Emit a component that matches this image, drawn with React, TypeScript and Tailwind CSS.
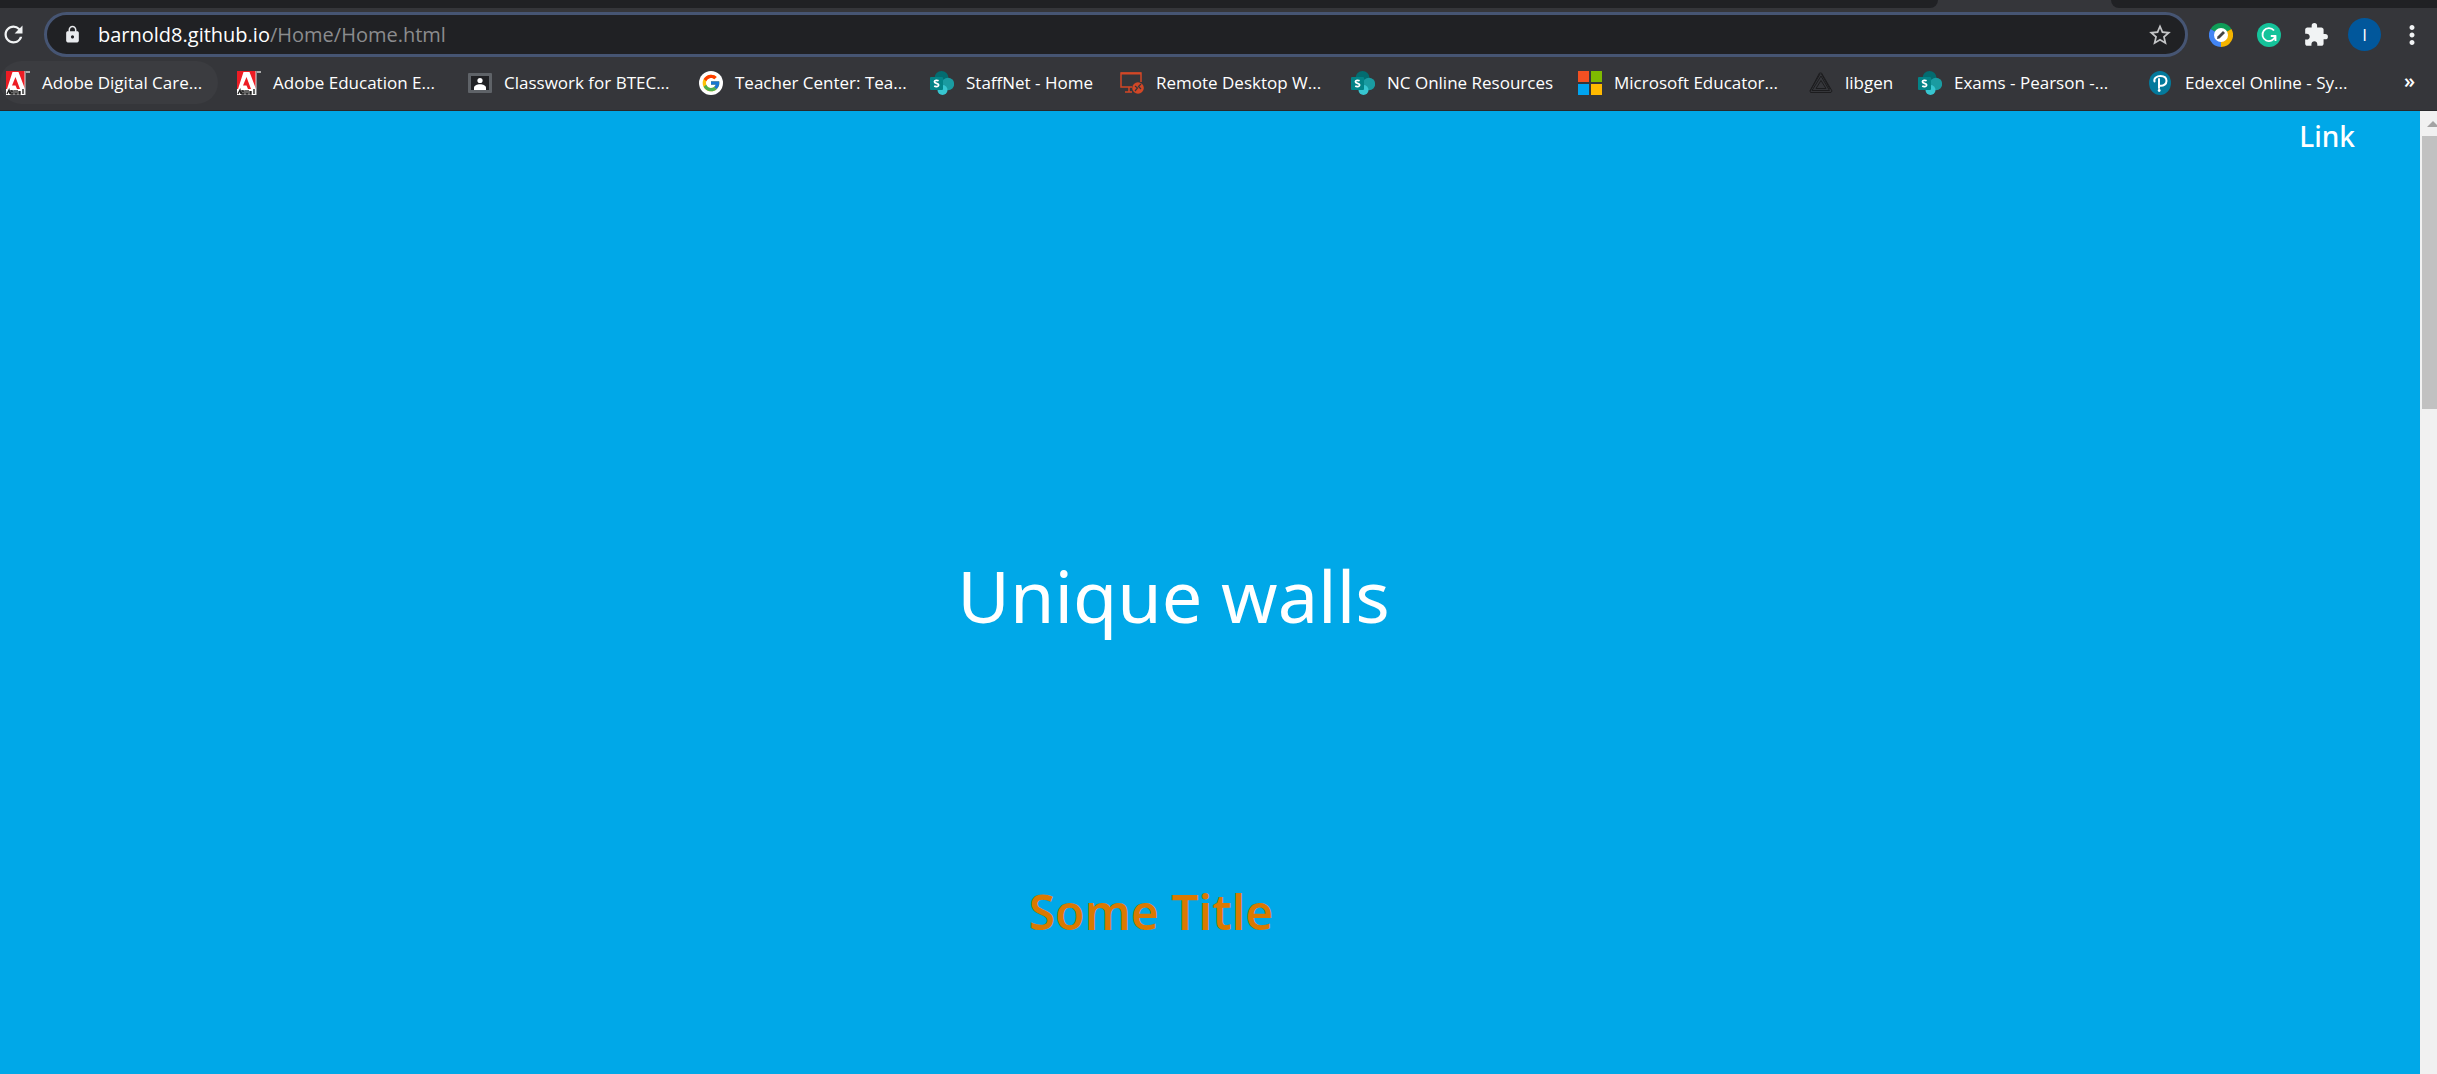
import React from "react";
import { MdLock, MdRefresh, MdStarBorder, MdExtension, MdMoreVert } from "react-icons/md";
import { FcGoogle } from "react-icons/fc";

function AdobeIcon() {
  return (
    <svg viewBox="0 0 24 24" className="size-6 shrink-0" aria-hidden="true">
      <path d="M0 0h19v18H0z" fill="#ed1c24" />
      <path d="M6.500 1h6L19 18v6H0v-6h1z" fill="#fff" />
      <path d="M9.500 6l4.500 12h-3l-1.500-3.500H6z" fill="#ed1c24" />
      <path d="M1 23l2-4 1 4M5 19v4h2v-3H5M9 19v4h2v-4M13 20v3h1v-3M17 18v5" stroke="#222" strokeWidth="1.400" fill="none" />
      <path d="M20 1h4" stroke="#aaa" strokeWidth="2" />
      <path d="M19 0v24" stroke="#ddd" strokeWidth="1" />
    </svg>
  );
}

function ClassroomIcon() {
  return (
    <svg viewBox="0 0 24 24" className="size-6 shrink-0" aria-hidden="true">
      <rect y="2" width="24" height="20" rx="1" fill="#5f6368" />
      <rect x="3" y="5" width="18" height="14" fill="#202124" />
      <circle cx="12" cy="9.500" r="2.600" fill="#fff" />
      <path d="M6 19v-2c0-5 12-5 12 0v2z" fill="#fff" />
    </svg>
  );
}

function GoogleIcon() {
  return (
    <span className="flex size-6 shrink-0 items-center justify-center rounded-full bg-white">
      <FcGoogle className="size-5" />
    </span>
  );
}

function SharePointIcon() {
  return (
    <svg viewBox="0 0 24 24" className="size-6 shrink-0" aria-hidden="true">
      <circle cx="11.500" cy="7" r="7" fill="#036c70" />
      <circle cx="18" cy="13" r="6.200" fill="#1a9ba1" />
      <circle cx="12.500" cy="19" r="5" fill="#37c6d0" />
      <rect y="6" width="13" height="13" rx="1" fill="#038387" />
      <path d="M8.600 9.800c-1.300-.8-4.200-.8-4.200 1 0 2 4.300 1.200 4.300 3.300 0 1.800-3 1.900-4.500 1" stroke="#fff" strokeWidth="1.700" fill="none" />
    </svg>
  );
}

function RemoteIcon() {
  return (
    <svg viewBox="0 0 24 24" className="size-6 shrink-0" aria-hidden="true" fill="none" stroke="#d24726">
      <path d="M12 16H1V2h20v9" strokeWidth="1.500" />
      <path d="M1 2.500h20" strokeWidth="2" />
      <path d="M9 16v5M5 21h7" strokeWidth="1.500" />
      <circle cx="18" cy="17" r="5.800" fill="#d24726" stroke="none" />
      <path d="M15 15l2.500 2L15 20M21 13l-2.500 2.500L21 18" stroke="#35363a" strokeWidth="1.200" />
    </svg>
  );
}

function MicrosoftIcon() {
  return (
    <svg viewBox="0 0 24 24" className="size-6 shrink-0" aria-hidden="true">
      <path d="M0 0h11v11H0z" fill="#f25022" />
      <path d="M13 0h11v11H13z" fill="#7fba00" />
      <path d="M0 13h11v11H0z" fill="#00a4ef" />
      <path d="M13 13h11v11H13z" fill="#ffb900" />
    </svg>
  );
}

function TriangleIcon() {
  return (
    <svg viewBox="0 0 24 24" className="size-6 shrink-0" aria-hidden="true" fill="none" stroke="#1c1c1e" strokeWidth="1">
      <path d="M10.500 2h2L23 20l-1 1.500H1.500L1 20z" />
      <path d="M12 5l8.500 14.500H3L12 5M12 9.500l5 8H7zM1 20l10-17M12.500 3L21 18" />
    </svg>
  );
}

function PearsonIcon() {
  return (
    <svg viewBox="0 0 24 24" className="size-6 shrink-0" aria-hidden="true">
      <ellipse cx="11" cy="12" rx="11" ry="12" fill="#047a9c" />
      <path d="M5.500 10.500C4.500 7 8 5 11.500 5c4 0 6 2 6 5 0 3.200-3 5-6 4.800M10 8v9" stroke="#fff" strokeWidth="2" fill="none" strokeLinecap="round" />
      <circle cx="10.200" cy="19.500" r="1.400" fill="#fff" />
    </svg>
  );
}

const bookmarks = [
  { label: "Adobe Digital Care...", Icon: AdobeIcon, width: "w-[231px]", active: true },
  { label: "Adobe Education E...", Icon: AdobeIcon, width: "w-[231px]" },
  { label: "Classwork for BTEC...", Icon: ClassroomIcon, width: "w-[231px]" },
  { label: "Teacher Center: Tea...", Icon: GoogleIcon, width: "w-[231px]" },
  { label: "StaffNet - Home", Icon: SharePointIcon, width: "w-[190px]" },
  { label: "Remote Desktop W...", Icon: RemoteIcon, width: "w-[231px]" },
  { label: "NC Online Resources", Icon: SharePointIcon, width: "w-[227px]" },
  { label: "Microsoft Educator...", Icon: MicrosoftIcon, width: "w-[231px]" },
  { label: "libgen", Icon: TriangleIcon, width: "w-[109px]" },
  { label: "Exams - Pearson -...", Icon: SharePointIcon, width: "w-[231px]" },
  { label: "Edexcel Online - Sy...", Icon: PearsonIcon, width: "w-[231px]" },
];

function TabStrip() {
  return (
    <div className="flex h-2 bg-[#35363a]">
      <div className="flex-1 rounded-br-lg bg-[#202124]" />
      <div className="w-[173px]" />
      <div className="w-[326px] rounded-bl-lg bg-[#202124]" />
    </div>
  );
}

function Toolbar() {
  return (
    <div className="flex h-[53px] items-center pr-[10px]">
      <button aria-label="Reload" className="w-11 shrink-0 text-[#f1f3f4]">
        <MdRefresh className="size-[27px]" />
      </button>
      <div className="flex h-[45px] flex-1 items-center rounded-full border-3 border-[#465573] bg-[#202124] pr-3 pl-4">
        <MdLock className="mr-4 size-[19px] shrink-0 text-[#e8eaed]" />
        <label className="flex flex-1 items-center text-[20px] text-[#8b8c8e]">
          <input
            aria-label="Address"
            defaultValue="barnold8.github.io"
            className="[field-sizing:content] bg-transparent text-white outline-none"
          />
          <span>/Home/Home.html</span>
        </label>
        <button aria-label="Bookmark this page" className="text-[#c4c5c7]">
          <MdStarBorder className="size-[26px]" />
        </button>
      </div>
      <div className="ml-[21px] flex items-center">
        <button aria-label="Web editor" className="mr-6">
          <svg viewBox="0 0 24 24" className="size-6">
            <path d="M12 12L1.600 6a12 12 0 0 1 20.800 0z" fill="#0f9d58" />
            <path d="M12 12L22.400 6A12 12 0 0 1 12 24z" fill="#f4b400" />
            <path d="M12 12v12A12 12 0 0 1 1.600 6z" fill="#4285f4" />
            <circle cx="12" cy="12" r="7" fill="#fff" />
            <path d="M8 16l.5-2.500 5.500-5.500 2 2-5.500 5.500z" fill="#444" />
          </svg>
        </button>
        <button aria-label="Grammar checker" className="mr-[22px]">
          <svg viewBox="0 0 24 24" className="size-6">
            <circle cx="12" cy="12" r="12" fill="#15c39a" />
            <path d="M17 7.500a6.500 6.500 0 1 0 1.300 5.500h-4.500M18.500 13v5" stroke="#fff" strokeWidth="1.800" fill="none" />
          </svg>
        </button>
        <button aria-label="Extensions" className="mr-[19px] text-[#f1f3f4]">
          <MdExtension className="size-[26px]" />
        </button>
        <button aria-label="Profile" className="mr-4 size-[33px] rounded-full bg-[#01579b] text-[17px] text-white">
          I
        </button>
        <button aria-label="Menu" className="text-[#f1f3f4]">
          <MdMoreVert className="size-[30px]" />
        </button>
      </div>
    </div>
  );
}

function BookmarksBar() {
  return (
    <nav aria-label="Bookmarks" className="flex h-[50px] items-start border-b border-[#28292c] text-[17px] text-white">
      {bookmarks.map(({ label, Icon, width, active }) => (
        <div key={label} className={width + " shrink-0"}>
          <a
            href="#"
            className={
              "flex h-[43px] w-fit items-center gap-3 rounded-full pr-4 pl-1.5 whitespace-nowrap" +
              (active ? " bg-[#3b3c40]" : "")
            }
          >
            <Icon />
            {label}
          </a>
        </div>
      ))}
      <button aria-label="More bookmarks" className="mr-[22px] ml-auto h-10 text-[20px] font-semibold">
        »
      </button>
    </nav>
  );
}

export default function App() {
  return (
    <div className="flex min-h-screen flex-col overflow-hidden bg-[#35363a] font-['Open_Sans',sans-serif]">
      <header>
        <TabStrip />
        <Toolbar />
        <BookmarksBar />
      </header>
      <div className="flex flex-1 bg-[#00a8e8] font-['Noto_Sans',sans-serif]">
        <main className="flex flex-1 flex-col text-white">
          <nav className="flex justify-end pt-[7px] pr-[65px]">
            <a href="#" className="text-[28px] leading-9 font-medium">
              Link
            </a>
          </nav>
          <h1 className="mt-[393px] pr-[73px] text-center text-[72px] leading-24">Unique walls</h1>
          <h2 className="mt-[237px] pr-[118px] text-center text-[48px] leading-16 font-semibold text-[#db7900]">
            Some Title
          </h2>
        </main>
        <div className="flex w-[17px] flex-col items-end bg-[#f1f1f1]" aria-hidden="true">
          <svg viewBox="0 0 15 25" className="h-[25px] w-[15px]">
            <path d="M5 16l6-6 6 6z" fill="#a3a3a3" />
          </svg>
          <div className="h-[273px] w-[15px] bg-[#c1c1c1]" />
        </div>
      </div>
    </div>
  );
}
